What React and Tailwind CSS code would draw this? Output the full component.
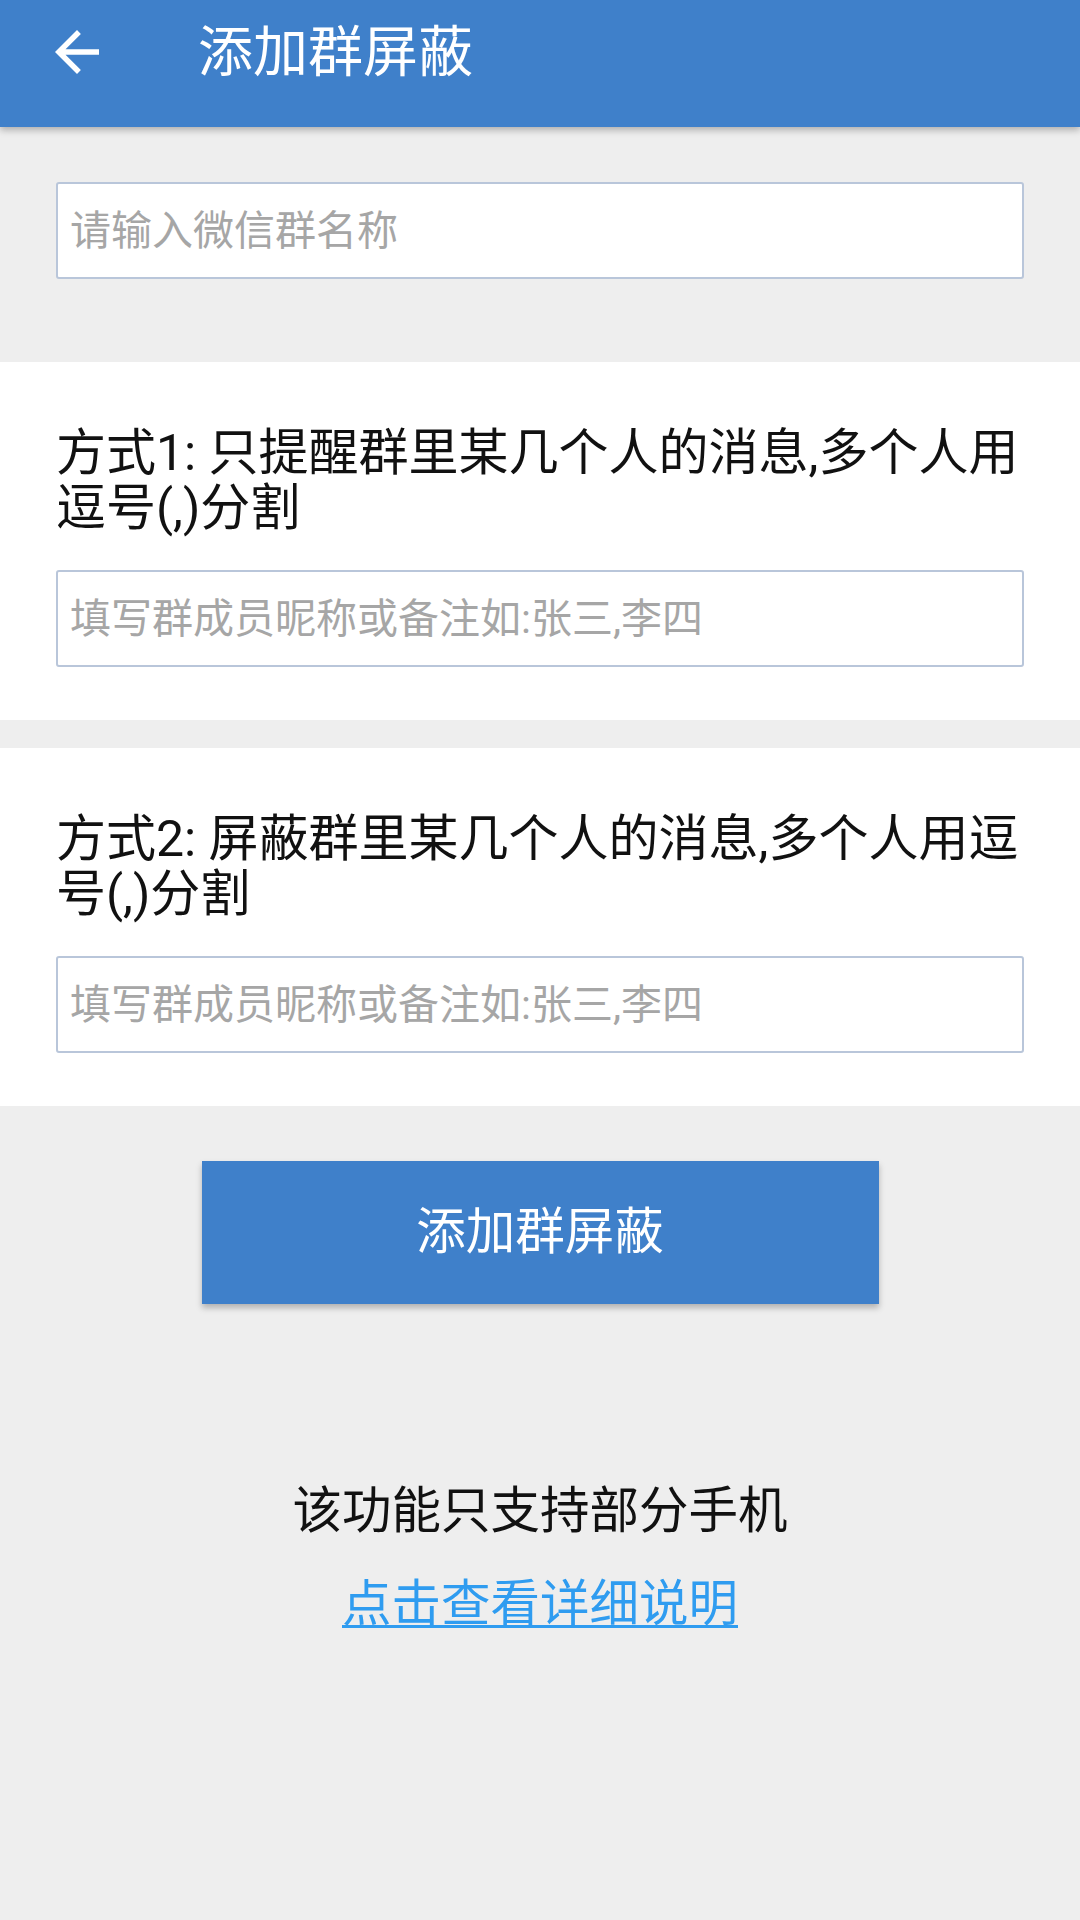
import React from "react";

const font = { fontFamily: 'Roboto, "Noto Sans CJK SC", sans-serif' };

function BackArrow() {
  return (
    <svg viewBox="0 0 24 24" className="w-[66px] h-[66px]" fill="#ffffff" aria-hidden="true">
      <path d="M20 11H7.83l5.59-5.59L12 4l-8 8 8 8 1.41-1.41L7.83 13H20v-2z" />
    </svg>
  );
}

function Field({ placeholder }) {
  return (
    <input
      type="text"
      placeholder={placeholder}
      className="block w-full h-[97px] bg-white border-2 border-[#b9c6da] rounded-[3px] pl-[12px] text-[41px] text-[#222] placeholder:text-[#a6a6a6] outline-none"
      style={font}
    />
  );
}

function MethodCard({ label }) {
  return (
    <section className="bg-white px-[56px] pt-[64px] pb-[53px]">
      <p className="text-[50px] leading-[55px] text-[#111]">{label}</p>
      <div className="mt-[34px]">
        <Field placeholder="填写群成员昵称或备注如:张三,李四" />
      </div>
    </section>
  );
}

export default function App() {
  return (
    <div className="min-h-[1920px] bg-[#eeeeee]" style={font}>
      {/* Toolbar */}
      <header className="relative z-10 h-[127px] pb-[23px] bg-[#3f80ca] shadow-[0_3px_7px_rgba(0,0,0,0.28)] flex items-center pl-[44px]">
        <BackArrow />
        <h1 className="ml-[88px] text-[55px] leading-none text-white font-normal">添加群屏蔽</h1>
      </header>

      {/* Group name */}
      <div className="px-[56px] pt-[55px]">
        <Field placeholder="请输入微信群名称" />
      </div>

      <div className="mt-[83px]">
        <MethodCard label="方式1: 只提醒群里某几个人的消息,多个人用逗号(,)分割" />
      </div>
      <div className="mt-[28px]">
        <MethodCard label="方式2: 屏蔽群里某几个人的消息,多个人用逗号(,)分割" />
      </div>

      {/* Submit */}
      <div className="flex justify-center mt-[55px]">
        <button
          type="button"
          className="w-[677px] h-[143px] bg-[#3f80ca] text-white text-[49.5px] shadow-[0_4px_6px_rgba(0,0,0,0.25)]"
          style={font}
        >
          添加群屏蔽
        </button>
      </div>

      {/* Footer note */}
      <div className="mt-[180px] flex flex-col items-center">
        <p className="text-[49.5px] leading-[55px] text-[#111]">该功能只支持部分手机</p>
        <a
          href="#"
          className="mt-[38px] text-[49.5px] leading-[55px] text-[#2f9cf0] underline decoration-[3px] underline-offset-[4px]"
        >
          点击查看详细说明
        </a>
      </div>
    </div>
  );
}
